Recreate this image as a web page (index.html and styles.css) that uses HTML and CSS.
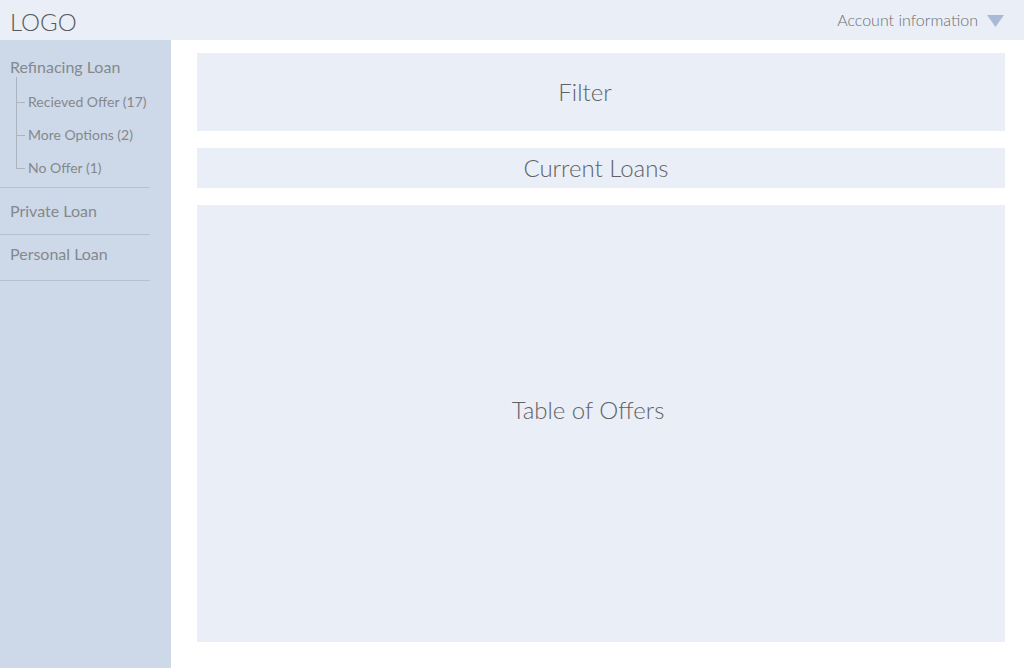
FILE: index.html
```html
<!DOCTYPE html>
<html>
<head>
<meta charset="utf-8">
<link rel="stylesheet" href="styles.css">
</head>
<body>
<header class="topbar">
  <div class="logo">LOGO</div>
  <div class="account">
    <span class="account-label">Account information</span>
    <svg class="caret" width="17" height="12" viewBox="0 0 17 12"><polygon points="0,0 17,0 8.5,12" fill="#a9bad4"/></svg>
  </div>
</header>
<div class="layout">
  <nav class="sidebar">
    <div class="group">
      <div class="nav-title">Refinacing Loan</div>
      <ul class="tree">
        <li>Recieved Offer (17)</li>
        <li>More Options (2)</li>
        <li>No Offer (1)</li>
      </ul>
    </div>
    <div class="group private"><div class="nav-title">Private Loan</div></div>
    <div class="group personal"><div class="nav-title">Personal Loan</div></div>
  </nav>
  <main class="content">
    <section class="panel filter">Filter</section>
    <section class="panel current">Current Loans</section>
    <section class="panel table">Table of Offers</section>
  </main>
</div>
</body>
</html>
```
FILE: styles.css
```css
* { box-sizing: border-box; }
html, body { margin: 0; padding: 0; }
body {
  width: 1024px;
  height: 668px;
  overflow: hidden;
  font-family: Lato, "Open Sans", sans-serif;
  background: #ffffff;
  color: #6b6e73;
}
.topbar {
  height: 40px;
  background: #eaeef6;
  display: flex;
  align-items: center;
  justify-content: space-between;
  padding: 0 20px 0 10px;
}
.logo {
  font-size: 24px;
  font-weight: 300;
  color: #55585d;
  margin-top: 2px;
}
.account {
  display: flex;
  align-items: center;
  gap: 9px;
  font-size: 16px;
  font-weight: 300;
  color: #6b6e73;
}
.account-label { margin-bottom: 2px; }
.caret { margin-top: 2px; }
.layout {
  display: flex;
  height: 628px;
}
.sidebar {
  width: 171px;
  background: #cdd9e8;
  padding-right: 21px;
}
.group {
  border-bottom: 1px solid #b6c1cd;
}
.nav-title {
  font-size: 16px;
  line-height: 19px;
  color: #85888d;
  padding-left: 10px;
}
.group:first-child .nav-title { padding-top: 17px; padding-bottom: 1px; }
.private .nav-title { padding-top: 13px; padding-bottom: 14px; }
.personal .nav-title { padding-top: 9px; padding-bottom: 17px; }
.tree {
  list-style: none;
  position: relative;
  margin: 0 0 0 16px;
  padding: 8px 0 3px 0;
}
.tree::before {
  content: "";
  position: absolute;
  left: 0;
  top: 0;
  bottom: 19px;
  border-left: 1px solid #aab4c0;
}
.tree li {
  position: relative;
  font-size: 14px;
  line-height: 33px;
  color: #85888d;
  padding-left: 12px;
}
.tree li::before {
  content: "";
  position: absolute;
  left: 0;
  top: 17px;
  width: 9px;
  border-top: 1px solid #aab4c0;
}
.content {
  flex: 1;
  padding: 13px 19px 0 26px;
  display: flex;
  flex-direction: column;
  gap: 17px;
}
.panel {
  background: #eaeef6;
  display: flex;
  align-items: center;
  justify-content: center;
  font-weight: 300;
  font-size: 24px;
  color: #5f6267;
}
.filter { height: 78px; padding-right: 32px; padding-bottom: 2px; }
.current { height: 40px; padding-right: 10px; padding-bottom: 2px; }
.table { height: 437px; padding-right: 26px; padding-bottom: 28px; }
```
